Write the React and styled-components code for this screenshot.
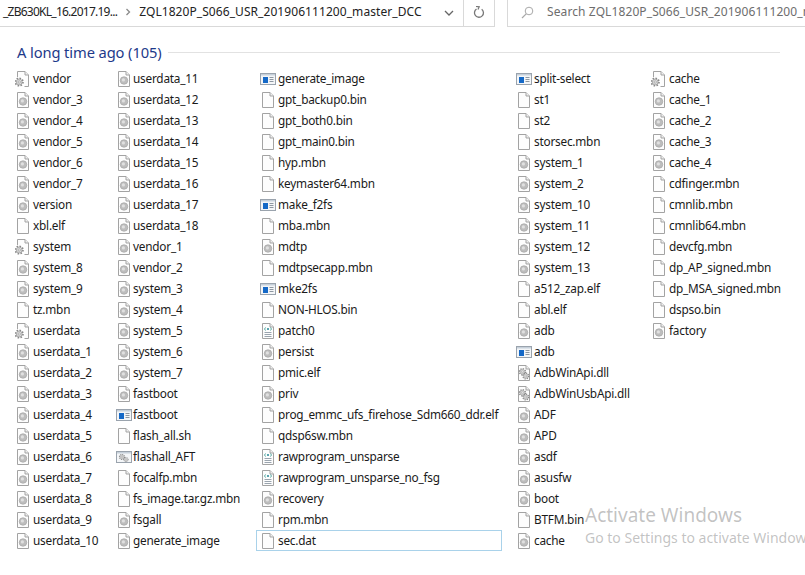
import React from 'react';
import styled, { createGlobalStyle } from 'styled-components';

const Global = createGlobalStyle`
  html, body { margin: 0; padding: 0; background: #fff; overflow: hidden; }
  body { font-family: "Noto Sans", "Open Sans", sans-serif; color: #1a1a1a; }
`;

const Page = styled.div`
  position: relative;
  width: 805px;
  height: 575px;
  overflow: hidden;
  background: #fff;
`;

const TopBar = styled.header`
  display: flex;
  height: 27px;
  font-size: 12px;
`;

const AddressBox = styled.div`
  display: flex;
  align-items: center;
  width: 494px;
  height: 26px;
  border-bottom: 1px solid #d9d9d9;
  border-right: 1px solid #d9d9d9;
`;

const Crumb = styled.span`
  white-space: nowrap;
  color: #222;
  margin-top: -4px;
  letter-spacing: 0.07px;
`;

const CrumbFirst = styled(Crumb)`
  margin-left: 3px;
  letter-spacing: -0.75px;
`;

const Arrow = styled.svg`
  width: 6px;
  height: 8px;
  margin: -2px 8px 0 8px;
  flex: none;
`;

const Dropdown = styled.svg`
  width: 10px;
  height: 6px;
  margin-left: auto;
  margin-top: -1px;
  flex: none;
`;

const RefreshCell = styled.div`
  display: flex;
  align-items: center;
  justify-content: center;
  width: 30px;
  height: 26px;
  margin-left: 9px;
  border-left: 1px solid #d9d9d9;
`;

const SearchBox = styled.div`
  display: flex;
  align-items: center;
  flex: 1;
  margin-left: 12px;
  height: 26px;
  border-left: 1px solid #d9d9d9;
  border-bottom: 1px solid #d9d9d9;
  padding-left: 13px;
  gap: 13px;
  color: #6d6d6d;
  white-space: nowrap;
  overflow: hidden;
`;

const SearchText = styled.span`
  margin-top: -4px;
  letter-spacing: 0.1px;
`;

const GroupHead = styled.div`
  display: flex;
  align-items: center;
  height: 20px;
  margin: 15px 25px 6px 17px;
  gap: 6px;
`;

const GroupTitle = styled.span`
  font-size: 14.7px;
  color: #1e3a8a;
  white-space: nowrap;
  letter-spacing: -0.1px;
`;

const GroupLine = styled.span`
  flex: 1;
  height: 1px;
  background: #e2e2e2;
`;

const Columns = styled.div`
  display: flex;
  padding-left: 15px;
`;

const Column = styled.div`
  display: flex;
  flex-direction: column;
  width: ${p => p.$w}px;
  flex: none;
`;

const Row = styled.div`
  display: flex;
  align-items: center;
  height: 21px;
  box-sizing: border-box;
  font-size: 11.8px;
  letter-spacing: -0.22px;
  white-space: nowrap;
  ${p => p.$selected && `
    margin-left: -4px;
    width: 246px;
    border: 1px solid #a9d2ea;
    padding-left: 3px;
  `}
`;

const Label = styled.span`
  margin-top: -2px;
`;

const IconBox = styled.span`
  display: flex;
  justify-content: flex-start;
  align-items: center;
  flex: none;
  width: ${p => p.$w}px;
  height: 18px;
`;

const Watermark = styled.div`
  position: absolute;
  left: 585px;
  top: 503px;
  color: rgba(120, 120, 120, 0.45);
  white-space: nowrap;
`;

const WmTitle = styled.div`
  font-size: 19px;
  line-height: 25px;
`;

const WmSub = styled.div`
  font-size: 14px;
  line-height: 20px;
`;

const Page16 = ({ children }) => (
  <svg width="16" height="16" viewBox="0 0 16 16">
    <path d="M2.5 .5H10L13.5 4V15.5H2.5Z" fill="#fdfdfd" stroke="#a3a3a3" />
    <path d="M10 .5V4H13.5" fill="#f0f0f0" stroke="#a3a3a3" />
    {children}
  </svg>
);

const Disc = () => (
  <Page16>
    <circle cx="8" cy="9.5" r="3.8" fill="#bdbdbd" stroke="#a0a0a0" strokeWidth=".6" />
    <circle cx="7.4" cy="8.9" r="1.6" fill="#e0e0e0" />
  </Page16>
);

const GearShape = ({ x, y, s = 1 }) => (
  <g transform={`translate(${x} ${y}) scale(${s})`}>
    <circle r="3.6" fill="none" stroke="#8a8a8a" strokeWidth="1.6" strokeDasharray="1.5 1.3" />
    <circle r="2.8" fill="#dcdcdc" stroke="#8a8a8a" strokeWidth=".6" />
    <circle r="1.1" fill="#fff" stroke="#8a8a8a" strokeWidth=".6" />
  </g>
);

const GearFile = () => (
  <Page16>
    <rect x="0" y="6" width="9.5" height="10" fill="#fff" />
    <GearShape x={4.2} y={11} s={1.05} />
  </Page16>
);

const Dll = () => (
  <Page16>
    <GearShape x={6.5} y={6.8} s={.85} />
    <GearShape x={9.8} y={11} s={.8} />
  </Page16>
);

const Xml = () => (
  <Page16>
    <path d="M6 4.5 4.2 6 6 7.5M10 4.5 11.8 6 10 7.5" fill="none" stroke="#55a7a0" strokeWidth=".9" />
    <circle cx="8" cy="6" r="1.1" fill="#2f8f9b" />
    <path d="M4.5 9.5h7M4.5 11.5h7M4.5 13.5h7" stroke="#8f9aa5" strokeWidth=".9" />
  </Page16>
);

const AppWin = () => (
  <svg width="16" height="14" viewBox="0 0 16 14">
    <rect x=".5" y="1.5" width="15" height="11" fill="#f4f6f8" stroke="#9aa3ad" />
    <rect x="1" y="2" width="14" height="1.5" fill="#c6d0da" />
    <rect x="3" y="5" width="5" height="6" fill="#1569c7" />
    <path d="M9.5 5.5h4M9.5 7.5h4M9.5 9.5h4" stroke="#8d97a1" />
  </svg>
);

const Bat = () => (
  <svg width="16" height="14" viewBox="0 0 16 14">
    <rect x=".5" y="1.5" width="15" height="11" fill="#f4f6f8" stroke="#9aa3ad" />
    <rect x="1" y="2" width="14" height="1.5" fill="#c6d0da" />
    <GearShape x={6} y={7} s={.7} />
    <GearShape x={10} y={9.5} s={.6} />
  </svg>
);

const icons = { f: () => <Page16 />, d: Disc, g: GearFile, a: AppWin, x: Xml, l: Dll, b: Bat };

const n = (names, t) => names.map(name => [name, t]);

const columns = [
  { w: 101, off: 18, items: [
    ['vendor', 'g'], ...n(['vendor_3', 'vendor_4', 'vendor_5', 'vendor_6', 'vendor_7', 'version'], 'd'),
    ['xbl.elf', 'f'], ['system', 'g'], ...n(['system_8', 'system_9'], 'd'), ['tz.mbn', 'f'], ['userdata', 'g'],
    ...n(['userdata_1', 'userdata_2', 'userdata_3', 'userdata_4', 'userdata_5', 'userdata_6', 'userdata_7', 'userdata_8', 'userdata_9', 'userdata_10'], 'd'),
  ] },
  { w: 144, off: 17, items: [
    ...n(['userdata_11', 'userdata_12', 'userdata_13', 'userdata_14', 'userdata_15', 'userdata_16', 'userdata_17', 'userdata_18', 'vendor_1', 'vendor_2', 'system_3', 'system_4', 'system_5', 'system_6', 'system_7', 'fastboot'], 'd'),
    ['fastboot', 'a'], ['flash_all.sh', 'f'], ['flashall_AFT', 'b'], ['focalfp.mbn', 'f'], ['fs_image.tar.gz.mbn', 'f'], ['fsgall', 'd'], ['generate_image', 'd'],
  ] },
  { w: 256, off: 18, items: [
    ['generate_image', 'a'], ...n(['gpt_backup0.bin', 'gpt_both0.bin', 'gpt_main0.bin', 'hyp.mbn', 'keymaster64.mbn'], 'f'),
    ['make_f2fs', 'a'], ['mba.mbn', 'f'], ['mdtp', 'd'], ['mdtpsecapp.mbn', 'f'], ['mke2fs', 'a'], ['NON-HLOS.bin', 'f'],
    ['patch0', 'x'], ['persist', 'd'], ['pmic.elf', 'f'], ['priv', 'd'], ['prog_emmc_ufs_firehose_Sdm660_ddr.elf', 'f'],
    ['qdsp6sw.mbn', 'f'], ['rawprogram_unsparse', 'x'], ['rawprogram_unsparse_no_fsg', 'x'], ['recovery', 'd'], ['rpm.mbn', 'f'], ['sec.dat', 'f', true],
  ] },
  { w: 135, off: 18, items: [
    ['split-select', 'a'], ...n(['st1', 'st2', 'storsec.mbn'], 'f'),
    ...n(['system_1', 'system_2', 'system_10', 'system_11', 'system_12', 'system_13'], 'd'),
    ...n(['a512_zap.elf', 'abl.elf'], 'f'), ['adb', 'd'], ['adb', 'a'], ...n(['AdbWinApi.dll', 'AdbWinUsbApi.dll'], 'l'),
    ...n(['ADF', 'APD', 'asdf', 'asusfw', 'boot'], 'd'), ['BTFM.bin', 'f'], ['cache', 'd'],
  ] },
  { w: 150, off: 18, items: [
    ['cache', 'g'], ...n(['cache_1', 'cache_2', 'cache_3', 'cache_4'], 'd'),
    ...n(['cdfinger.mbn', 'cmnlib.mbn', 'cmnlib64.mbn', 'devcfg.mbn', 'dp_AP_signed.mbn', 'dp_MSA_signed.mbn', 'dspso.bin'], 'f'),
    ['factory', 'd'],
  ] },
];

export default function App() {
  return (
    <Page>
      <Global />
      <TopBar>
        <AddressBox>
          <CrumbFirst>_ZB630KL_16.2017.19...</CrumbFirst>
          <Arrow viewBox="0 0 6 8"><path d="M1.5 1 4.5 4 1.5 7" fill="none" stroke="#8a8a8a" strokeWidth="1.3" /></Arrow>
          <Crumb>ZQL1820P_S066_USR_201906111200_master_DCC</Crumb>
          <Dropdown viewBox="0 0 10 6"><path d="M1 1 5 5 9 1" fill="none" stroke="#666" strokeWidth="1.3" /></Dropdown>
          <RefreshCell>
            <svg width="12" height="13" viewBox="0 0 12 13" style={{ marginTop: -1 }}>
              <path d="M8.7 3.2A4.5 4.5 0 1 1 3.5 3" fill="none" stroke="#777" strokeWidth="1.3" />
              <path d="M3 .5 6.2 .8 5 3.6" fill="none" stroke="#777" strokeWidth="1.2" />
            </svg>
          </RefreshCell>
        </AddressBox>
        <SearchBox>
          <svg width="13" height="13" viewBox="0 0 13 13" style={{ flex: 'none', marginTop: -2 }}>
            <circle cx="8" cy="5" r="3.8" fill="none" stroke="#a8a8a8" />
            <path d="M5.2 7.8 1 12" stroke="#a8a8a8" strokeWidth="1.2" />
          </svg>
          <SearchText>Search ZQL1820P_S066_USR_201906111200_master_DCC</SearchText>
        </SearchBox>
      </TopBar>
      <GroupHead>
        <GroupTitle>A long time ago (105)</GroupTitle>
        <GroupLine />
      </GroupHead>
      <Columns>
        {columns.map((col, i) => (
          <Column key={i} $w={col.w}>
            {col.items.map(([name, type, selected], j) => {
              const Icon = icons[type];
              return (
                <Row key={j} $selected={selected}>
                  <IconBox $w={col.off}><Icon /></IconBox>
                  <Label>{name}</Label>
                </Row>
              );
            })}
          </Column>
        ))}
      </Columns>
      <Watermark>
        <WmTitle>Activate Windows</WmTitle>
        <WmSub>Go to Settings to activate Windows.</WmSub>
      </Watermark>
    </Page>
  );
}
